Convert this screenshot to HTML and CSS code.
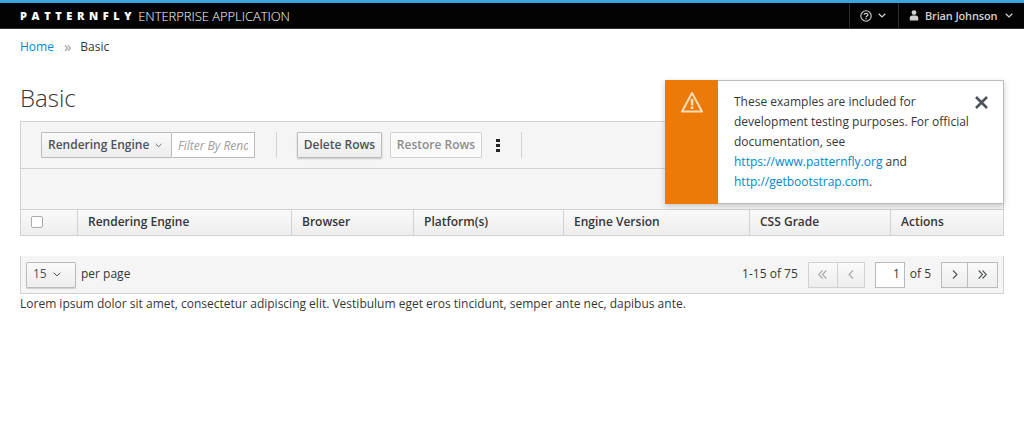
FILE: index.html
```html
<!DOCTYPE html>
<html lang="en">
<head>
    <meta charset="UTF-8">
    <meta name="viewport" content="width=device-width, initial-scale=1.0">
    <title>Basic</title>
    <link rel="stylesheet" href="styles.css">
</head>
<body>
    <nav class="navbar">
        <div class="brand">
            <span class="brand-name">PATTERNFLY</span>
            <span class="brand-sub">ENTERPRISE APPLICATION</span>
        </div>
        <div class="nav-utility">
            <a class="nav-item nav-help">
                <svg class="icon-help" width="12" height="12" viewBox="0 0 12 12"><circle cx="6" cy="6" r="5.2" fill="none" stroke="#d1d1d1" stroke-width="1.1"/><path d="M4.2 4.8 C4.2 2.8 7.9 2.8 7.9 4.7 C7.9 6 6 5.9 6 7.2" fill="none" stroke="#d1d1d1" stroke-width="1.2"/><rect x="5.4" y="8" width="1.2" height="1.3" fill="#d1d1d1"/></svg>
                <svg class="caret" width="8" height="5" viewBox="0 0 8 5"><path d="M0.7 0.7 L4 3.9 L7.3 0.7" fill="none" stroke="#d1d1d1" stroke-width="1.3"/></svg>
            </a>
            <a class="nav-item nav-user">
                <svg width="10" height="11" viewBox="0 0 10 11"><circle cx="5" cy="2.6" r="2.4" fill="#d1d1d1"/><path d="M0.8 10.6 V7.6 C0.8 6.2 2 5.6 3.2 5.4 H6.8 C8 5.6 9.2 6.2 9.2 7.6 V10.6 Z" fill="#d1d1d1"/></svg>
                <span>Brian Johnson</span>
                <svg class="caret" width="8" height="5" viewBox="0 0 8 5"><path d="M0.7 0.7 L4 3.9 L7.3 0.7" fill="none" stroke="#d1d1d1" stroke-width="1.3"/></svg>
            </a>
        </div>
    </nav>

    <main class="content">
        <ol class="breadcrumb">
            <li><a href="#">Home</a></li>
            <li class="crumb-sep">&raquo;</li>
            <li>Basic</li>
        </ol>

        <h1 class="page-title">Basic</h1>

        <div class="toolbar">
            <div class="filter-group">
                <button class="btn btn-filter">Rendering Engine
                    <svg width="7" height="5" viewBox="0 0 8 5"><path d="M0.7 0.7 L4 3.9 L7.3 0.7" fill="none" stroke="#4d5258" stroke-width="1"/></svg>
                </button>
                <input class="filter-input" type="text" placeholder="Filter By Rendering Engine">
            </div>
            <span class="divider"></span>
            <button class="btn btn-delete">Delete Rows</button>
            <button class="btn btn-restore">Restore Rows</button>
            <span class="kebab"><i></i><i></i><i></i></span>
            <span class="divider"></span>
        </div>
        <div class="results-row"></div>

        <div class="table-head">
            <div class="th th-check"><span class="checkbox"></span></div>
            <div class="th th-engine">Rendering Engine</div>
            <div class="th th-browser">Browser</div>
            <div class="th th-platform">Platform(s)</div>
            <div class="th th-version">Engine Version</div>
            <div class="th th-grade">CSS Grade</div>
            <div class="th th-actions">Actions</div>
        </div>

        <div class="pagination">
            <button class="btn btn-perpage">15
                <svg width="8" height="5" viewBox="0 0 8 5"><path d="M0.7 0.7 L4 3.9 L7.3 0.7" fill="none" stroke="#4d5258" stroke-width="1"/></svg>
            </button>
            <span class="per-page">per page</span>
            <span class="page-range">1-15 of 75</span>
            <div class="page-btns disabled">
                <button class="page-btn wide"><svg width="9" height="9" viewBox="0 0 9 9"><path d="M4.5 .5 L.7 4.5 L4.5 8.5 M8.3 .5 L4.5 4.5 L8.3 8.5" fill="none" stroke="#a8a8a8" stroke-width="1.1"/></svg></button>
                <button class="page-btn"><svg width="6" height="9" viewBox="0 0 6 9"><path d="M5 .5 L1 4.5 L5 8.5" fill="none" stroke="#a8a8a8" stroke-width="1.1"/></svg></button>
            </div>
            <input class="page-input" type="text" value="1">
            <span class="page-of">of 5</span>
            <div class="page-btns">
                <button class="page-btn"><svg width="6" height="9" viewBox="0 0 6 9"><path d="M1 .5 L5 4.5 L1 8.5" fill="none" stroke="#4d5258" stroke-width="1.1"/></svg></button>
                <button class="page-btn wide"><svg width="9" height="9" viewBox="0 0 9 9"><path d="M.7 .5 L4.5 4.5 L.7 8.5 M4.5 .5 L8.3 4.5 L4.5 8.5" fill="none" stroke="#4d5258" stroke-width="1.1"/></svg></button>
            </div>
        </div>

        <p class="lorem">Lorem ipsum dolor sit amet, consectetur adipiscing elit. Vestibulum eget eros tincidunt, semper ante nec, dapibus ante.</p>
    </main>

    <div class="toast">
        <div class="toast-icon">
            <svg width="22" height="22" viewBox="0 0 22 22"><path d="M11 2 L21 20.5 H1 Z" fill="none" stroke="#fbdcb8" stroke-width="2" stroke-linejoin="round"/><rect x="9.8" y="8" width="2.6" height="6.4" fill="#fbdcb8"/><rect x="9.8" y="15.4" width="2.6" height="2.6" fill="#fbdcb8"/></svg>
        </div>
        <div class="toast-body">
            These examples are included for development testing purposes. For official documentation, see
            <a href="#">https://www.patternfly.org</a> and <a href="#">http://getbootstrap.com</a>.
        </div>
        <svg class="toast-close" width="13" height="13" viewBox="0 0 13 13"><path d="M1 1 L12 12 M12 1 L1 12" fill="none" stroke="#4d5258" stroke-width="2.6"/></svg>
    </div>
</body>
</html>
```

FILE: styles.css
```css
* {
    box-sizing: border-box;
}
body {
    font-family: 'Open Sans', sans-serif;
    font-size: 12px;
    line-height: 20px;
    color: #363636;
    background-color: #fff;
    margin: 0;
    padding: 0;
}
a {
    color: #0088ce;
    text-decoration: none;
}

/* top bar */
.navbar {
    height: 29px;
    background-color: #030303;
    border-top: 3px solid #39a5dc;
    border-bottom: 1px solid #333;
    display: flex;
    justify-content: space-between;
    align-items: stretch;
}
.brand {
    display: flex;
    align-items: center;
    padding-left: 20px;
    color: #fff;
}
.brand-name {
    font-weight: 800;
    font-size: 11px;
    letter-spacing: 4.6px;
    margin-right: 2px;
}
.brand-sub {
    font-weight: 300;
    font-size: 13px;
    letter-spacing: -0.05px;
}
.nav-utility {
    display: flex;
}
.nav-item {
    display: flex;
    align-items: center;
    color: #d1d1d1;
    border-left: 1px solid #2b2b2b;
    font-size: 11px;
}
.nav-help {
    width: 49px;
    padding-left: 10px;
    gap: 6px;
}
.nav-user {
    width: 126px;
    padding-left: 10px;
    gap: 6px;
}
.nav-user span {
    font-weight: 600;
    letter-spacing: -0.15px;
    margin-right: 2px;
}

/* page */
.content {
    padding: 0 20px;
}
.breadcrumb {
    list-style: none;
    display: flex;
    align-items: center;
    margin: 0;
    padding: 7px 0 0;
    height: 29px;
}
.crumb-sep {
    color: #9c9c9c;
    font-size: 15px;
    margin: 0 9px 3px 10px;
}
.page-title {
    font-size: 24px;
    font-weight: 300;
    line-height: 28px;
    margin: 26px 0 9px;
}

/* toolbar */
.toolbar {
    height: 48px;
    background-color: #f5f5f5;
    border: 1px solid #d1d1d1;
    border-bottom: 1px solid #d1d1d1;
    display: flex;
    align-items: center;
    padding: 0 20px;
}
.results-row {
    height: 40px;
    background-color: #f5f5f5;
    border-left: 1px solid #d1d1d1;
    border-right: 1px solid #d1d1d1;
}
.btn {
    font-family: inherit;
    font-size: 12px;
    font-weight: 600;
    color: #4d5258;
    height: 26px;
    border: 1px solid #bbb;
    border-radius: 1px;
    background: linear-gradient(#fafafa, #ededed);
    padding: 0 6px 2px;
}
.filter-group {
    display: flex;
}
.btn-filter {
    width: 131px;
    display: flex;
    align-items: center;
    gap: 6px;
    white-space: nowrap;
}
.btn-filter svg {
    margin-top: 2px;
}
.filter-input {
    width: 83px;
    height: 26px;
    border: 1px solid #bbb;
    border-left: 0;
    font-family: inherit;
    font-size: 12px;
    font-style: italic;
    padding: 0 6px;
}
.filter-input::placeholder {
    color: #9c9c9c;
}
.divider {
    width: 1px;
    height: 26px;
    background-color: #d1d1d1;
    margin: 0 20px 0 21px;
}
.btn-delete {
    width: 85px;
    box-shadow: 0 1px 2px rgba(3, 3, 3, 0.2);
    margin-right: 8px;
    padding: 0 0 2px;
    white-space: nowrap;
}
.btn-restore {
    width: 92px;
    padding: 0 0 2px;
    white-space: nowrap;
    color: #8b8d8f;
    border-color: #d1d1d1;
    background: #fafafa;
}
.kebab {
    display: flex;
    flex-direction: column;
    gap: 2px;
    margin-left: 14px;
}
.kebab i {
    width: 4px;
    height: 3px;
    background-color: #252525;
}

/* table header */
.table-head {
    display: flex;
    height: 27px;
    border: 1px solid #d1d1d1;
    border-bottom: 1px solid #d1d1d1;
    background: linear-gradient(#fafafa, #ededed);
    font-weight: 600;
    color: #363636;
}
.th {
    display: flex;
    align-items: center;
    padding: 0 0 2px 10px;
    border-left: 1px solid #d1d1d1;
}
.th-check {
    width: 56px;
    border-left: 0;
}
.th-engine { width: 214px; }
.th-browser { width: 122px; }
.th-platform { width: 150px; }
.th-version { width: 186px; }
.th-grade { width: 141px; }
.th-actions { flex: 1; }
.checkbox {
    width: 12px;
    height: 12px;
    border: 1px solid #a9a9a9;
    border-radius: 2px;
    background-color: #fff;
}

/* pagination */
.pagination {
    display: flex;
    align-items: center;
    height: 38px;
    margin-top: 20px;
    padding: 0 5px;
    background-color: #f5f5f5;
    border-bottom: 1px solid #d1d1d1;
    border-left: 1px solid #d1d1d1;
    border-right: 1px solid #d1d1d1;
}
.btn-perpage {
    width: 50px;
    height: 26px;
    display: flex;
    align-items: center;
    gap: 6px;
    font-weight: 400;
    box-shadow: 0 1px 1px rgba(3, 3, 3, 0.15);
}
.btn-perpage svg {
    margin-top: 2px;
}
.per-page {
    margin-left: 5px;
    margin-bottom: 2px;
}
.page-range {
    margin-left: auto;
    margin-right: 10px;
    margin-bottom: 2px;
}
.page-btns {
    display: flex;
}
.page-btn {
    width: 27px;
    height: 26px;
    padding: 0;
    border: 1px solid #bbb;
    background: linear-gradient(#fafafa, #ededed);
    display: flex;
    align-items: center;
    justify-content: center;
}
.page-btn + .page-btn {
    border-left: 0;
}
.page-btn.wide {
    width: 30px;
}
.disabled .page-btn {
    border-color: #d1d1d1;
}
.page-input {
    width: 30px;
    height: 26px;
    margin-left: 10px;
    border: 1px solid #bbb;
    font-family: inherit;
    font-size: 12px;
    color: #363636;
    text-align: right;
    padding: 0 4px 2px;
}
.page-of {
    margin: 0 10px 2px 5px;
}
.lorem {
    margin: 0;
}

/* notification */
.toast {
    position: absolute;
    left: 665px;
    top: 80px;
    width: 339px;
    height: 124px;
    display: flex;
    background-color: #fff;
    border: 1px solid #bbb;
    border-left: 0;
    box-shadow: 0 2px 6px rgba(3, 3, 3, 0.2);
}
.toast-icon {
    width: 53px;
    background-color: #ec7a08;
    margin-top: -1px;
    margin-bottom: -1px;
    display: flex;
    justify-content: center;
    padding-top: 11px;
}
.toast-body {
    padding: 11px 0 0 16px;
    box-sizing: content-box;
    width: 240px;
}
.toast-close {
    position: absolute;
    right: 15px;
    top: 15px;
}
```
